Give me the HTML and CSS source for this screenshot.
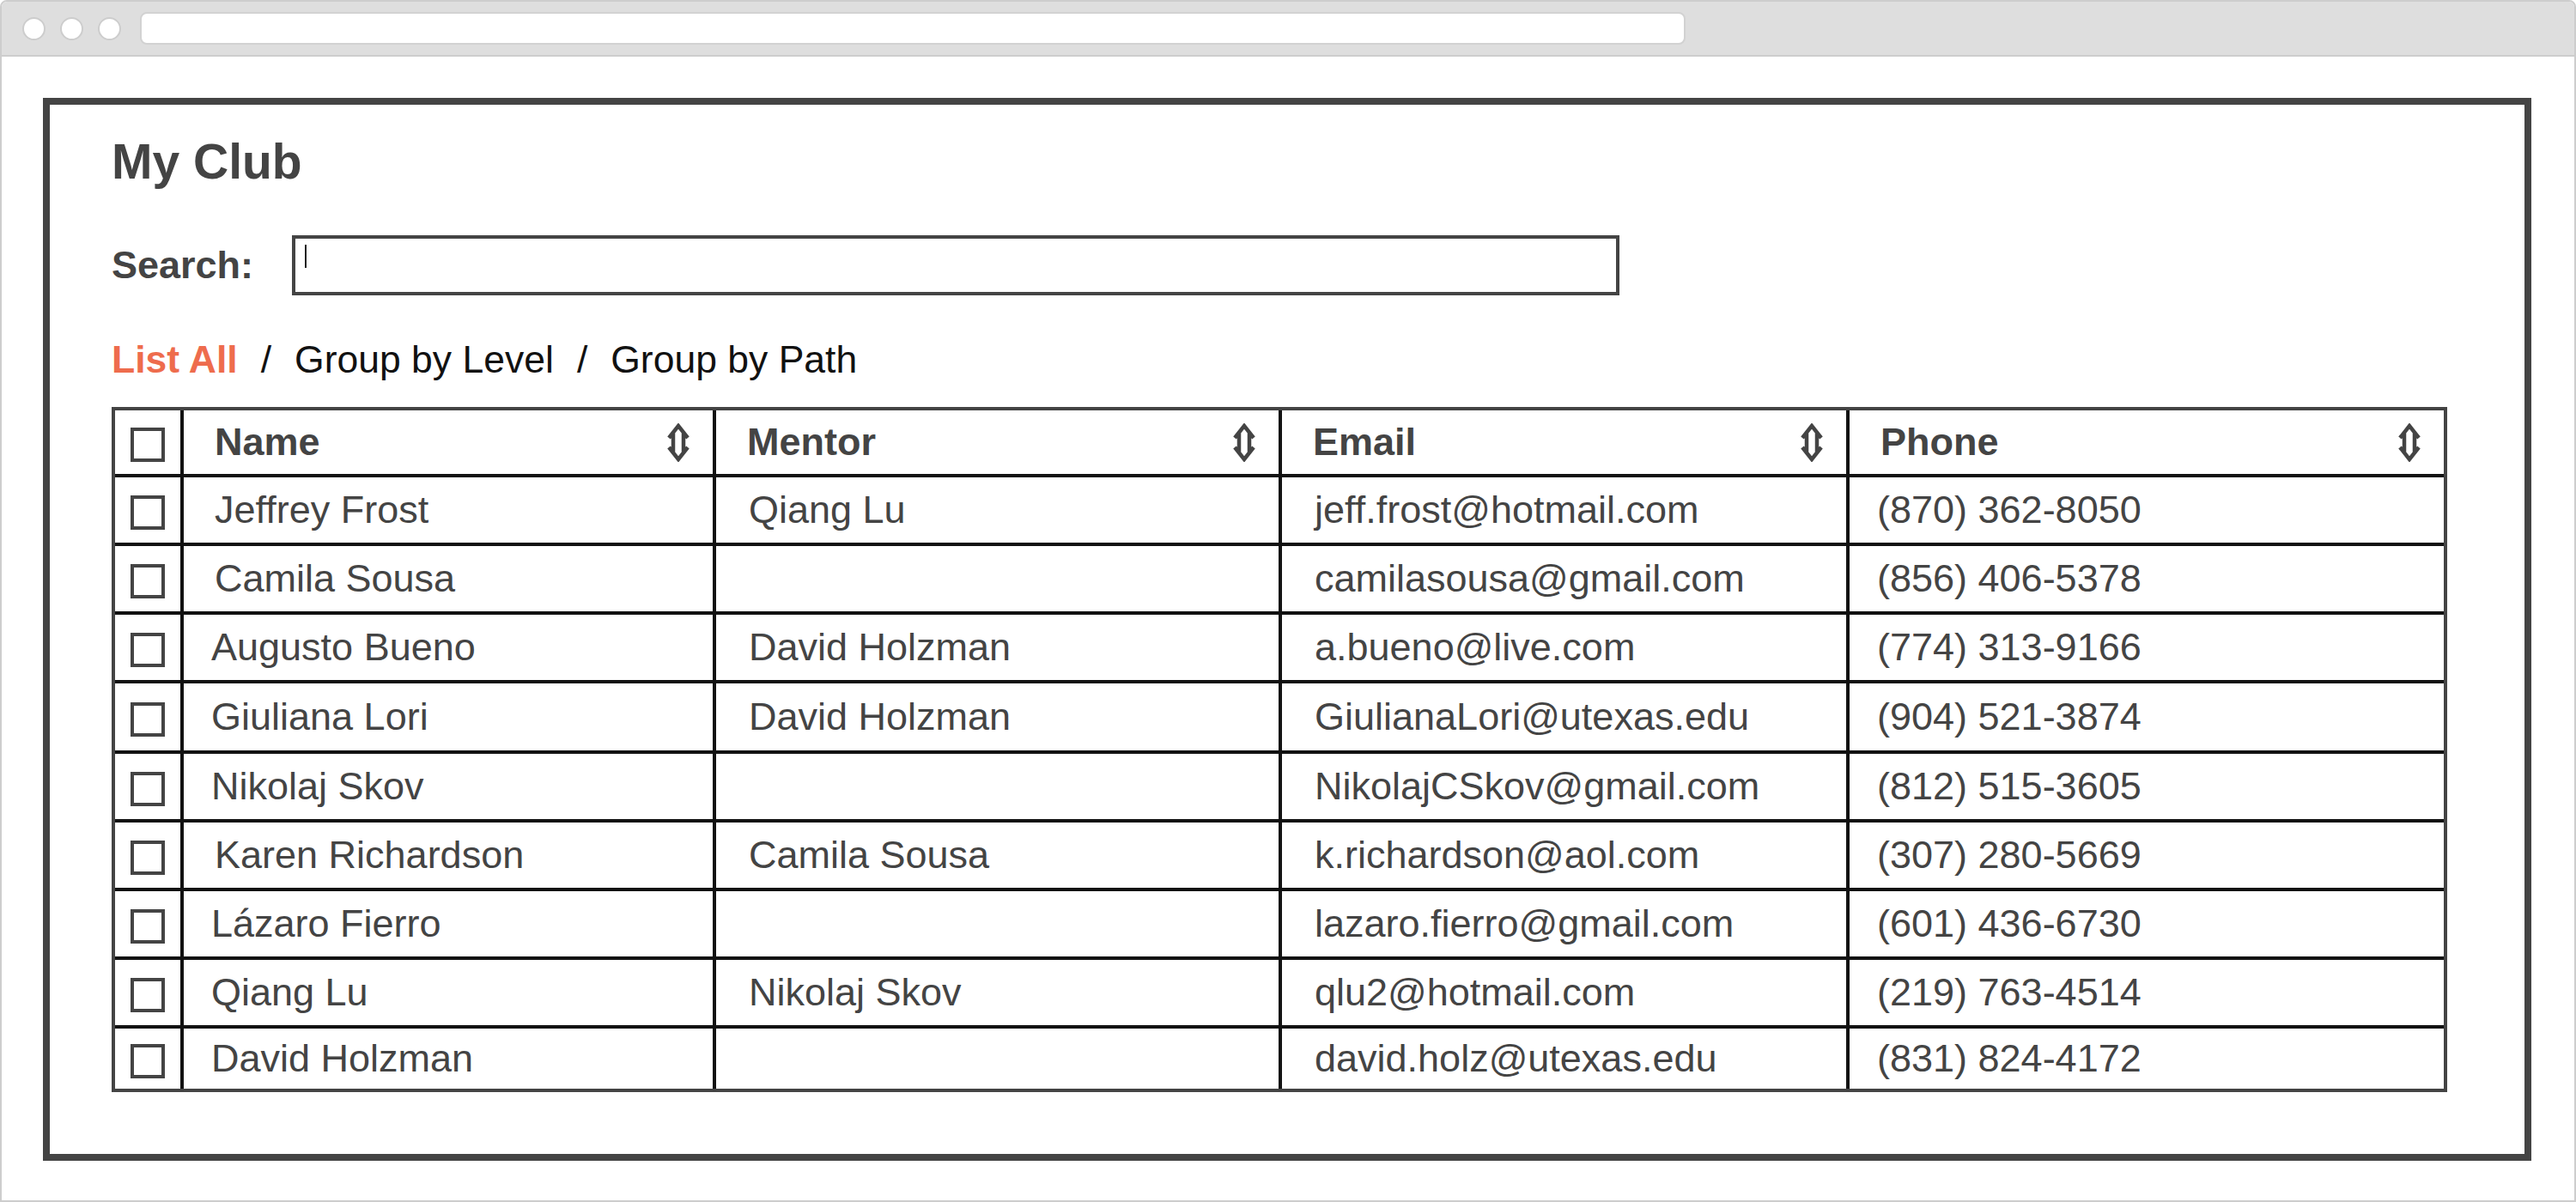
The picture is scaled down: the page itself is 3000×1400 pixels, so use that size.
FILE: index.html
```html
<!DOCTYPE html>
<html lang="en">
<head>
    <meta charset="UTF-8">
    <meta name="viewport" content="width=device-width, initial-scale=1.0">
    <title>My Club</title>
    <link rel="stylesheet" href="styles.css">
</head>
<body>
    <div class="window">
        <div class="titlebar">
            <span class="dot"></span>
            <span class="dot"></span>
            <span class="dot"></span>
            <div class="address"></div>
        </div>

        <div class="page">
            <div class="club">
                <h1>My Club</h1>

                <div class="search">
                    <label>Search:</label>
                    <div class="search-box"><span class="caret"></span></div>
                </div>

                <div class="views">
                    <a class="active">List All</a>
                    <span>/</span>
                    <a>Group by Level</a>
                    <span>/</span>
                    <a>Group by Path</a>
                </div>

                <table class="members">
                    <thead>
                        <tr>
                            <th class="col-check"><span class="box"></span></th>
                            <th class="col-name"><div class="th-inner">Name <svg class="sort" viewBox="0 0 26 45"><path d="M2 17 L13 3 L24 17 M2 28 L13 42 L24 28 M7 10.6 V34.4 M19 10.6 V34.4"/></svg></div></th>
                            <th class="col-mentor"><div class="th-inner">Mentor <svg class="sort" viewBox="0 0 26 45"><path d="M2 17 L13 3 L24 17 M2 28 L13 42 L24 28 M7 10.6 V34.4 M19 10.6 V34.4"/></svg></div></th>
                            <th class="col-email"><div class="th-inner">Email <svg class="sort" viewBox="0 0 26 45"><path d="M2 17 L13 3 L24 17 M2 28 L13 42 L24 28 M7 10.6 V34.4 M19 10.6 V34.4"/></svg></div></th>
                            <th class="col-phone"><div class="th-inner">Phone <svg class="sort" viewBox="0 0 26 45"><path d="M2 17 L13 3 L24 17 M2 28 L13 42 L24 28 M7 10.6 V34.4 M19 10.6 V34.4"/></svg></div></th>
                        </tr>
                    </thead>
                    <tbody>
                        <tr>
                            <td><span class="box"></span></td>
                            <td>Jeffrey Frost</td>
                            <td>Qiang Lu</td>
                            <td>jeff.frost@hotmail.com</td>
                            <td class="phone">(870) 362-8050</td>
                        </tr>
                        <tr>
                            <td><span class="box"></span></td>
                            <td>Camila Sousa</td>
                            <td></td>
                            <td>camilasousa@gmail.com</td>
                            <td class="phone">(856) 406-5378</td>
                        </tr>
                        <tr>
                            <td><span class="box"></span></td>
                            <td class="tight">Augusto Bueno</td>
                            <td>David Holzman</td>
                            <td>a.bueno@live.com</td>
                            <td class="phone">(774) 313-9166</td>
                        </tr>
                        <tr class="tall">
                            <td><span class="box"></span></td>
                            <td class="tight">Giuliana Lori</td>
                            <td>David Holzman</td>
                            <td>GiulianaLori@utexas.edu</td>
                            <td class="phone">(904) 521-3874</td>
                        </tr>
                        <tr>
                            <td><span class="box"></span></td>
                            <td class="tight">Nikolaj Skov</td>
                            <td></td>
                            <td>NikolajCSkov@gmail.com</td>
                            <td class="phone">(812) 515-3605</td>
                        </tr>
                        <tr>
                            <td><span class="box"></span></td>
                            <td>Karen Richardson</td>
                            <td>Camila Sousa</td>
                            <td>k.richardson@aol.com</td>
                            <td class="phone">(307) 280-5669</td>
                        </tr>
                        <tr>
                            <td><span class="box"></span></td>
                            <td class="tight">Lázaro Fierro</td>
                            <td></td>
                            <td>lazaro.fierro@gmail.com</td>
                            <td class="phone">(601) 436-6730</td>
                        </tr>
                        <tr>
                            <td><span class="box"></span></td>
                            <td class="tight">Qiang Lu</td>
                            <td>Nikolaj Skov</td>
                            <td>qlu2@hotmail.com</td>
                            <td class="phone">(219) 763-4514</td>
                        </tr>
                        <tr class="last">
                            <td><span class="box"></span></td>
                            <td class="tight">David Holzman</td>
                            <td></td>
                            <td>david.holz@utexas.edu</td>
                            <td class="phone">(831) 824-4172</td>
                        </tr>
                    </tbody>
                </table>
            </div>
        </div>
    </div>
</body>
</html>
```

FILE: styles.css
```css
* {
    box-sizing: border-box;
}
body {
    margin: 0;
    font-family: 'Liberation Sans', Arial, sans-serif;
    background: #fff;
    color: #444;
}
.window {
    width: 3000px;
    height: 1400px;
    border: 2px solid #cdcdcd;
    border-radius: 8px 8px 0 0;
    overflow: hidden;
}
.titlebar {
    display: flex;
    align-items: center;
    height: 64px;
    padding-left: 24px;
    background: #dedede;
    border-bottom: 2px solid #cdcdcd;
}
.dot {
    width: 27px;
    height: 27px;
    margin-right: 17px;
    border-radius: 50%;
    background: #fff;
    border: 2px solid #cdcdcd;
}
.address {
    width: 1800px;
    height: 38px;
    margin-left: 5px;
    background: #fff;
    border: 2px solid #d2d2d2;
    border-radius: 8px;
}
.page {
    padding: 48px 50px 0 48px;
}
.club {
    border: 8px solid #444;
    padding: 34px 0 72px 72px;
}
h1 {
    margin: 0;
    font-size: 57px;
    line-height: 64px;
    font-weight: bold;
    color: #444;
}
.search {
    display: flex;
    align-items: center;
    gap: 45px;
    margin-top: 54px;
}
.search label {
    font-size: 45px;
    line-height: 52px;
    font-weight: bold;
    color: #444;
}
.search-box {
    width: 1546px;
    height: 70px;
    border: 4px solid #444;
    padding: 7px 11px;
}
.caret {
    display: block;
    width: 2px;
    height: 27px;
    background: #222;
}
.views {
    display: flex;
    gap: 27px;
    margin-top: 49px;
    font-size: 44.5px;
    line-height: 52px;
    color: #111;
}
.views a {
    color: #111;
    text-decoration: none;
    cursor: pointer;
}
.views a.active {
    color: #ee6c4d;
    font-weight: bold;
}
.members {
    width: 2720px;
    margin-top: 29px;
    table-layout: fixed;
    border-collapse: separate;
    border-spacing: 0;
    border: 4px solid #444;
    font-size: 45px;
    line-height: 52px;
    color: #444;
}
.members th, .members td {
    padding: 0 27px 0 38px;
    vertical-align: middle;
    text-align: left;
    white-space: nowrap;
    border-left: 4px solid #111;
}
.members th {
    padding-left: 36px;
    font-weight: bold;
}
.members td {
    border-top: 4px solid #111;
}
.members th:first-child, .members td:first-child {
    border-left: none;
    padding: 0;
    text-align: center;
}
.members thead tr { height: 74px; }
.members tbody tr { height: 80px; }
.members tbody tr.tall { height: 82px; }
.members tbody tr.last { height: 74px; }
.col-check { width: 76px; }
.col-name { width: 620px; }
.col-mentor { width: 659px; }
.col-email { width: 661px; }
.col-phone { width: 696px; }
.members td:nth-child(2) { padding-left: 36px; }
.members td.tight { padding-left: 32px; }
.members td.phone { padding-left: 32px; }
.th-inner {
    display: flex;
    align-items: center;
    justify-content: space-between;
}
.sort {
    width: 26px;
    height: 45px;
    fill: none;
    stroke: #444;
    stroke-width: 4.5;
    stroke-linejoin: miter;
}
.box {
    display: inline-block;
    width: 40px;
    height: 40px;
    border: 4px solid #444;
    vertical-align: middle;
}
```
